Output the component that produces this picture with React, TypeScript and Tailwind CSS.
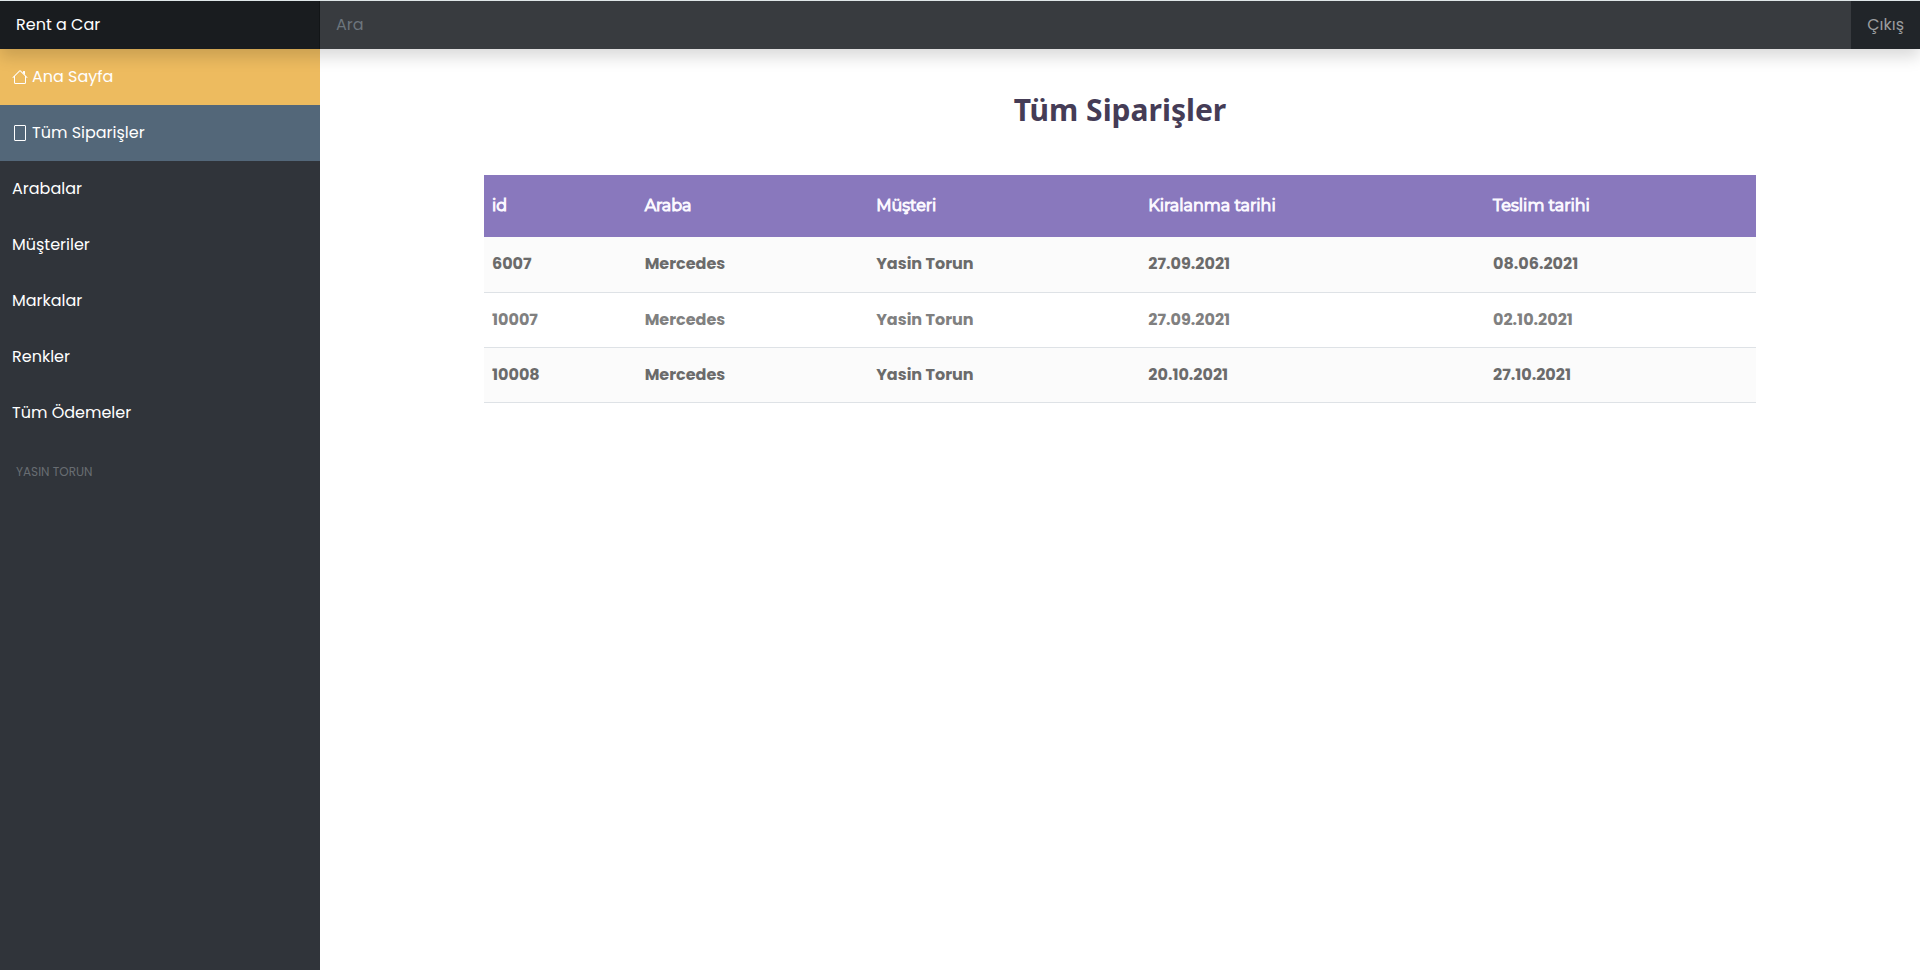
const links = ['Arabalar', 'Müşteriler', 'Markalar', 'Renkler', 'Tüm Ödemeler'];

const columns = ['id', 'Araba', 'Müşteri', 'Kiralanma tarihi', 'Teslim tarihi'];

const orders = [
  ['6007', 'Mercedes', 'Yasin Torun', '27.09.2021', '08.06.2021'],
  ['10007', 'Mercedes', 'Yasin Torun', '27.09.2021', '02.10.2021'],
  ['10008', 'Mercedes', 'Yasin Torun', '20.10.2021', '27.10.2021'],
];

function HouseIcon() {
  return (
    <svg className="h-4 w-4" viewBox="0 0 16 16" fill="currentColor" aria-hidden="true">
      <path
        fillRule="evenodd"
        d="M2 13.5V7h1v6.5a.5.5 0 0 0 .5.5h9a.5.5 0 0 0 .5-.5V7h1v6.5a1.5 1.5 0 0 1-1.5 1.5h-9A1.5 1.5 0 0 1 2 13.5zm11-11V6l-2-2V2.5a.5.5 0 0 1 .5-.5h1a.5.5 0 0 1 .5.5z"
      />
      <path
        fillRule="evenodd"
        d="M7.293 1.5a1 1 0 0 1 1.414 0l6.647 6.646a.5.5 0 0 1-.708.708L8 2.207 1.354 8.854a.5.5 0 1 1-.708-.708L7.293 1.5z"
      />
    </svg>
  );
}

function FrameIcon() {
  return (
    <svg className="h-4 w-4" viewBox="0 0 16 16" fill="none" stroke="currentColor" aria-hidden="true">
      <rect x="2.5" y="0.5" width="11" height="15" rx="0.5" />
    </svg>
  );
}

export default function App() {
  return (
    <div className="flex min-h-screen flex-col bg-white font-['Poppins','Inter',sans-serif] text-base">
      <header className="relative z-10 flex h-[49px] border-t border-[#dfe6e8] bg-[#212529] shadow-[0_8px_16px_rgba(0,0,0,0.15)]">
        <a href="#" className="flex w-80 items-center bg-[#191c1f] px-4 text-white shadow-[inset_-1px_0_0_rgba(0,0,0,0.25)]">
          Rent a Car
        </a>
        <input
          type="text"
          aria-label="Ara"
          placeholder="Ara"
          className="min-w-0 flex-1 bg-[#383b3f] px-4 text-white outline-none placeholder:text-[#6c757d]"
        />
        <a href="#" className="flex items-center px-4 text-[#9b9d9f]">
          Çıkış
        </a>
      </header>
      <div className="flex flex-1">
        <aside className="w-80 shrink-0 bg-[#30343a] text-white">
          <nav>
            <a href="#" className="flex h-14 items-center gap-1 bg-[#edbb5f] px-3">
              <HouseIcon />
              Ana Sayfa
            </a>
            <a href="#" className="flex h-14 items-center gap-1 bg-[#536779] px-3">
              <FrameIcon />
              Tüm Siparişler
            </a>
            {links.map((link) => (
              <a key={link} href="#" className="flex h-14 items-center px-3">
                {link}
              </a>
            ))}
          </nav>
          <p className="px-4 pt-5 text-xs leading-[22px] text-[#686d72]">YASIN TORUN</p>
        </aside>
        <main className="min-w-0 flex-1 px-6 pt-10">
          <h1 className="text-center font-['Noto_Sans','Open_Sans',sans-serif] text-3xl leading-[42px] font-bold text-[#453c56]">
            Tüm Siparişler
          </h1>
          <table className="mx-auto mt-11 w-full max-w-[1272px] table-fixed border-collapse text-left">
            <colgroup>
              <col className="w-[12%]" />
              <col className="w-[18.2%]" />
              <col className="w-[21.4%]" />
              <col className="w-[27.1%]" />
              <col />
            </colgroup>
            <thead className="bg-[#8978bd] font-['Montserrat','Poppins',sans-serif] text-[#fbf8ff]">
              <tr className="h-[62px]">
                {columns.map((column) => (
                  <th key={column} className="px-2 font-normal [-webkit-text-stroke:1px_#fbf8ff]">
                    {column}
                  </th>
                ))}
              </tr>
            </thead>
            <tbody>
              {orders.map((order) => (
                <tr
                  key={order[0]}
                  className="h-[55px] border-b border-[#dee2e6] font-bold text-[#808080] odd:bg-[#fbfbfb] odd:text-[#6b6b6b]"
                >
                  {order.map((value, index) => (
                    <td key={columns[index]} className="px-2">
                      {value}
                    </td>
                  ))}
                </tr>
              ))}
            </tbody>
          </table>
        </main>
      </div>
    </div>
  );
}
